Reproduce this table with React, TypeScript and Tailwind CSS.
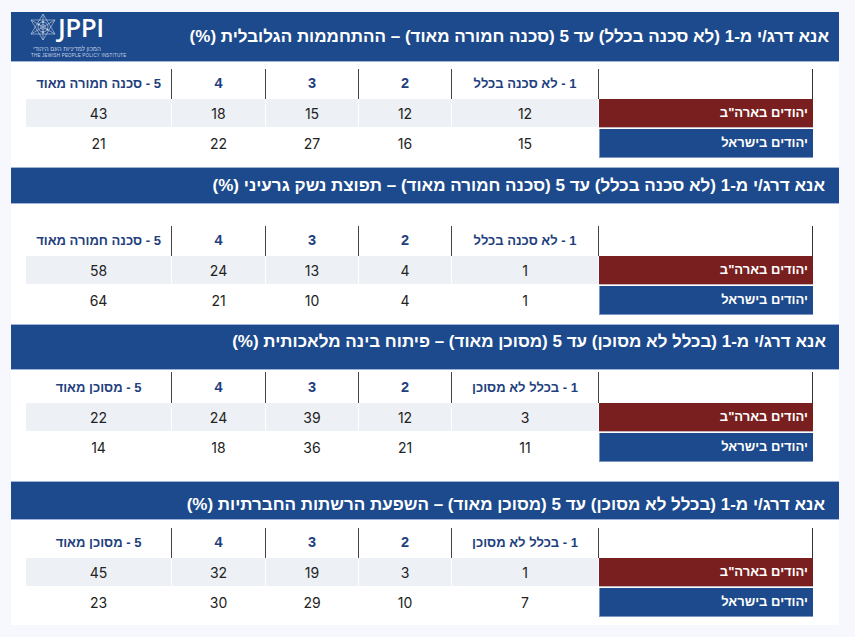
import React from 'react';

type Row = { label: string; tone: 'red' | 'blue'; values: number[] };

type Section = {
  title: string;
  cols: string[];
  rows: Row[];
  headerH: string;
  headerPad: string;
  gapTop: string;
  gapBottom: string;
  thH: string;
  logo?: boolean;
};

const dangerCols = ['1 - לא סכנה בכלל', '2', '3', '4', '5 - סכנה חמורה מאוד'];
const riskCols = ['1 - בכלל לא מסוכן', '2', '3', '4', '5 - מסוכן מאוד'];

const sections: Section[] = [
  {
    title: 'אנא דרג/י מ-1 (לא סכנה בכלל) עד 5 (סכנה חמורה מאוד) – ההתחממות הגלובלית (%)',
    cols: dangerCols,
    rows: [
      { label: 'יהודים בארה"ב', tone: 'red', values: [12, 12, 15, 18, 43] },
      { label: 'יהודים בישראל', tone: 'blue', values: [15, 16, 27, 22, 21] },
    ],
    headerH: 'h-[50px]',
    headerPad: 'items-center pr-[10px]',
    gapTop: 'h-[7px]',
    gapBottom: 'h-[9px]',
    thH: 'h-[30px]',
    logo: true,
  },
  {
    title: 'אנא דרג/י מ-1 (לא סכנה בכלל) עד 5 (סכנה חמורה מאוד) – תפוצת נשק גרעיני (%)',
    cols: dangerCols,
    rows: [
      { label: 'יהודים בארה"ב', tone: 'red', values: [1, 4, 13, 24, 58] },
      { label: 'יהודים בישראל', tone: 'blue', values: [1, 4, 10, 21, 64] },
    ],
    headerH: 'h-[37px]',
    headerPad: 'items-center pr-[14px]',
    gapTop: 'h-[22px]',
    gapBottom: 'h-[9px]',
    thH: 'h-[30px]',
  },
  {
    title: 'אנא דרג/י מ-1 (בכלל לא מסוכן) עד 5 (מסוכן מאוד) – פיתוח בינה מלאכותית (%)',
    cols: riskCols,
    rows: [
      { label: 'יהודים בארה"ב', tone: 'red', values: [3, 12, 39, 24, 22] },
      { label: 'יהודים בישראל', tone: 'blue', values: [11, 21, 36, 18, 14] },
    ],
    headerH: 'h-[46px]',
    headerPad: 'items-start pt-[6px] pr-[13px]',
    gapTop: 'h-[2px]',
    gapBottom: 'h-[19px]',
    thH: 'h-[31px]',
  },
  {
    title: 'אנא דרג/י מ-1 (בכלל לא מסוכן) עד 5 (מסוכן מאוד) – השפעת הרשתות החברתיות (%)',
    cols: riskCols,
    rows: [
      { label: 'יהודים בארה"ב', tone: 'red', values: [1, 3, 19, 32, 45] },
      { label: 'יהודים בישראל', tone: 'blue', values: [7, 10, 29, 30, 23] },
    ],
    headerH: 'h-[39px]',
    headerPad: 'items-center pt-[8px] pr-[14px]',
    gapTop: 'h-[8px]',
    gapBottom: 'h-[8px]',
    thH: 'h-[30px]',
  },
];

function Logo() {
  return (
    <div className="flex flex-col items-start" dir="ltr">
      <div className="flex items-center gap-[2px]">
        <svg width="26" height="28" viewBox="0 0 26 28" fill="none" stroke="#c9d4e8" strokeWidth="0.6">
          <polygon points="13,1 25,21 1,21" />
          <polygon points="13,27 1,7 25,7" />
          <circle cx="13" cy="14" r="5" />
          <circle cx="13" cy="14" r="2.4" />
          <line x1="1" y1="7" x2="25" y2="21" />
          <line x1="25" y1="7" x2="1" y2="21" />
          <line x1="13" y1="1" x2="13" y2="27" />
          <circle cx="13" cy="9" r="0.8" fill="#c9d4e8" />
          <circle cx="13" cy="19" r="0.8" fill="#c9d4e8" />
          <circle cx="8.7" cy="11.5" r="0.8" fill="#c9d4e8" />
          <circle cx="17.3" cy="16.5" r="0.8" fill="#c9d4e8" />
        </svg>
        <span className="font-['Open_Sans','Liberation_Sans',sans-serif] text-[26px] font-semibold leading-none tracking-[-0.5px] text-white">
          JPPI
        </span>
      </div>
      <span className="mt-[5px] ml-[3px] font-['Liberation_Sans',sans-serif] text-[6px] leading-[7px] text-[#c9d4e8]" dir="rtl">
        המכון למדיניות העם היהודי
      </span>
      <span className="ml-[1px] font-['Liberation_Sans',sans-serif] text-[4.5px] leading-[6px] tracking-[0.2px] text-[#c9d4e8]">
        THE JEWISH PEOPLE POLICY INSTITUTE
      </span>
    </div>
  );
}

function TableBlock({ s }: { s: Section }) {
  return (
    <div className="grid grid-cols-[214px_147px_93px_93px_94px_146px] w-[787px] mr-[26px]">
      {/* header row */}
      <div className={`${s.thH} border-r border-[#333]`} />
      {s.cols.map((c) => (
        <div
          key={c}
          className={`${s.thH} flex items-center justify-center border-r border-[#444] font-bold text-[#1f3f7e] ${
            c.length === 1 ? 'text-[14.5px]' : 'text-[13px]'
          }`}
        >
          {c}
        </div>
      ))}

      {/* data rows */}
      {s.rows.map((r, ri) => (
        <React.Fragment key={r.label}>
          <div
            className={`h-[29px] flex items-center pr-[5px] text-[13px] font-bold text-white ${
              r.tone === 'red'
                ? 'bg-[#7a1f20] border-b border-[#c7b4b8]'
                : 'bg-[#1c4a8c] border-l border-b border-[#7d97c2] mt-[1px]'
            }`}
          >
            {r.label}
          </div>
          {r.values.map((v, i) => (
            <div
              key={i}
              className={`h-[29px] flex items-center justify-center border-r border-white font-['Inter','Liberation_Sans',sans-serif] text-[14px] text-[#222] ${
                ri === 0 ? 'bg-[#edf0f5] border-b' : 'bg-white mt-[1px]'
              }`}
            >
              {v}
            </div>
          ))}
        </React.Fragment>
      ))}
    </div>
  );
}

function SectionBlock({ s }: { s: Section }) {
  return (
    <section>
      <div
        className={`${s.headerH} ${s.headerPad} flex justify-between bg-[#1c4a8c] border-b border-[#9fb4d6] ${
          s.logo ? '' : 'border-t border-t-[#9fb4d6]'
        }`}
      >
        <h2 className="text-[17px] font-bold leading-[22px] text-white">{s.title}</h2>
        {s.logo && (
          <div className="ml-[19px] self-start pt-[1px]">
            <Logo />
          </div>
        )}
      </div>
      <div className={s.gapTop} />
      <TableBlock s={s} />
      <div className={s.gapBottom} />
    </section>
  );
}

export default function App() {
  return (
    <div className="min-h-[637px] bg-[#f7f8fd] pt-[12px] pl-[11px]">
      <div
        dir="rtl"
        className="w-[828px] bg-white font-['Liberation_Sans','DejaVu_Sans',sans-serif]"
      >
        {sections.map((s) => (
          <SectionBlock key={s.title} s={s} />
        ))}
      </div>
    </div>
  );
}
